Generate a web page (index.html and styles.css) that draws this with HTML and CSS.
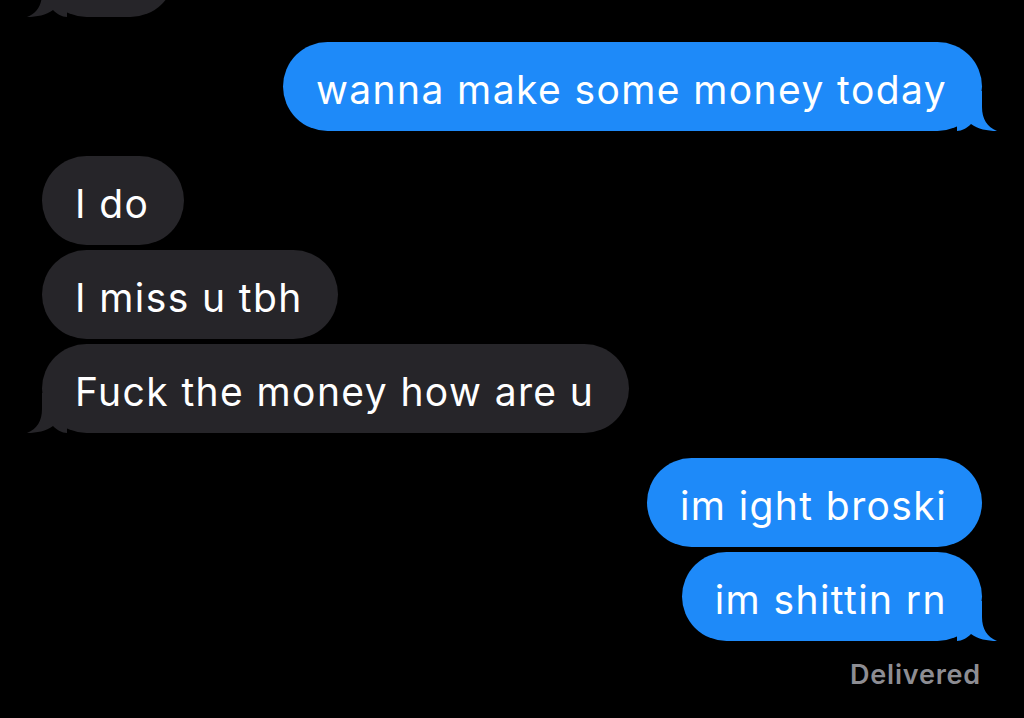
FILE: index.html
```html
<!DOCTYPE html>
<html lang="en">
<head>
    <meta charset="UTF-8">
    <meta name="viewport" content="width=device-width, initial-scale=1.0">
    <title>Messages</title>
    <link rel="stylesheet" href="styles.css">
</head>
<body>
    <div class="thread">
        <!-- bubble cut off by the top of the screen -->
        <div class="bubble them tail cut-off">&nbsp;</div>

        <div class="group">
            <div class="bubble me tail">wanna make some money today</div>
        </div>

        <div class="group">
            <div class="bubble them">I do</div>
            <div class="bubble them">I miss u tbh</div>
            <div class="bubble them tail">Fuck the money how are u</div>
        </div>

        <div class="group">
            <div class="bubble me">im ight broski</div>
            <div class="bubble me tail">im shittin rn</div>
            <div class="status">Delivered</div>
        </div>
    </div>
</body>
</html>
```

FILE: styles.css
```css
body {
    margin: 0;
    padding: 0;
    background: #000;
    overflow: hidden;
    font-family: Inter, "Noto Sans", sans-serif;
}
.thread {
    display: flex;
    flex-direction: column;
    padding: 0 42px;
    margin-top: -72px;
}
.group {
    display: flex;
    flex-direction: column;
    gap: 5px;
    margin-top: 25px;
}
.bubble {
    position: relative;
    box-sizing: border-box;
    height: 89px;
    line-height: 89px;
    padding: 3px 35px 0 33px;
    border-radius: 45px;
    font-size: 39px;
    letter-spacing: 1.4px;
    color: #fff;
    white-space: nowrap;
}
.bubble.them {
    align-self: flex-start;
    background: #262529;
}
.bubble.me {
    align-self: flex-end;
    background: #1e8af9;
}
.bubble.cut-off {
    width: 133px;
}
.bubble.tail::after {
    content: "";
    position: absolute;
    bottom: 0;
    width: 40px;
    height: 40px;
    background: inherit;
    -webkit-mask: url("data:image/svg+xml,%3Csvg xmlns='http://www.w3.org/2000/svg' viewBox='0 0 40 40'%3E%3Cpath d='M0 0H25V16C25 28 30 36 40 40C30 40 21 38 14 33C10 37 5 40 0 40Z'/%3E%3C/svg%3E") no-repeat;
    mask: url("data:image/svg+xml,%3Csvg xmlns='http://www.w3.org/2000/svg' viewBox='0 0 40 40'%3E%3Cpath d='M0 0H25V16C25 28 30 36 40 40C30 40 21 38 14 33C10 37 5 40 0 40Z'/%3E%3C/svg%3E") no-repeat;
}
.bubble.me.tail::after {
    right: -15px;
}
.bubble.them.tail::after {
    left: -15px;
    transform: scaleX(-1);
}
.status {
    align-self: flex-end;
    margin: 12px 1px 0 0;
    font-size: 27px;
    font-weight: 600;
    letter-spacing: 0.8px;
    color: #8d8d93;
}
```
